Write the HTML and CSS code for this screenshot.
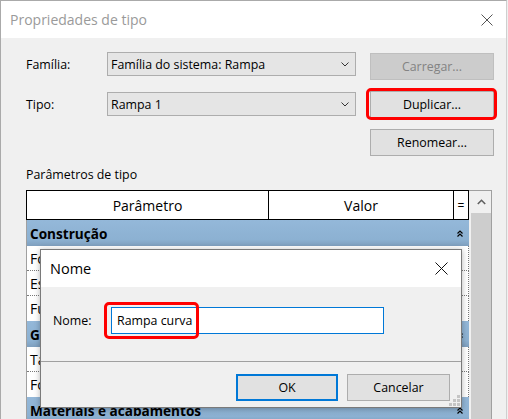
FILE: index.html
```html
<!DOCTYPE html>
<html lang="pt">
<head>
<meta charset="utf-8">
<title>Propriedades de tipo</title>
<link rel="stylesheet" href="styles.css">
</head>
<body>
<div class="window">
  <div class="titlebar">
    <span class="title">Propriedades de tipo</span>
    <svg class="x-icon x-outer" width="12" height="12" viewBox="0 0 12 12"><path d="M0.5 0.5L11.5 11.5M11.5 0.5L0.5 11.5"/></svg>
  </div>
  <div class="body">
    <div class="top">
      <div class="fields">
        <div class="field">
          <span class="label">Família:</span>
          <div class="combo"><span>Família do sistema: Rampa</span><svg class="chev" width="8" height="5" viewBox="0 0 8 5"><path d="M0.5 0.5L4 4L7.5 0.5"/></svg></div>
        </div>
        <div class="field">
          <span class="label">Tipo:</span>
          <div class="combo"><span>Rampa 1</span><svg class="chev" width="8" height="5" viewBox="0 0 8 5"><path d="M0.5 0.5L4 4L7.5 0.5"/></svg></div>
        </div>
      </div>
      <div class="actions">
        <button class="btn btn-disabled">Carregar...</button>
        <div class="marked">
          <button class="btn">Duplicar...</button>
          <span class="mark mark-dup"></span>
        </div>
        <button class="btn">Renomear...</button>
      </div>
    </div>
    <div class="section-label">Parâmetros de tipo</div>
    <div class="grid">
      <div class="grid-main">
        <div class="thead">
          <div class="th th-param">Parâmetro</div>
          <div class="th th-val">Valor</div>
          <div class="th th-eq">=</div>
        </div>
        <div class="group"><span>Construção</span><svg class="dchev" width="6" height="7" viewBox="0 0 6 7"><path d="M0.5 3.5L3 1L5.5 3.5M0.5 6.5L3 4L5.5 6.5"/></svg></div>
        <div class="row">Forma</div>
        <div class="row">Espessura</div>
        <div class="row row-last">Função</div>
        <div class="group"><span>Gráficos</span><svg class="dchev" width="6" height="7" viewBox="0 0 6 7"><path d="M0.5 3.5L3 1L5.5 3.5M0.5 6.5L3 4L5.5 6.5"/></svg></div>
        <div class="row">Tamanho do texto</div>
        <div class="row row-last">Fonte do texto</div>
        <div class="group"><span>Materiais e acabamentos</span><svg class="dchev" width="6" height="7" viewBox="0 0 6 7"><path d="M0.5 3.5L3 1L5.5 3.5M0.5 6.5L3 4L5.5 6.5"/></svg></div>
      </div>
      <div class="scrollbar">
        <div class="sb-up"><svg width="9" height="6" viewBox="0 0 9 6"><path d="M0.8 5L4.5 1.3L8.2 5"/></svg></div>
        <div class="sb-thumb"></div>
      </div>
    </div>
  </div>

  <div class="dialog">
    <div class="dlg-title">
      <span>Nome</span>
      <svg class="x-icon x-inner" width="13" height="13" viewBox="0 0 13 13"><path d="M0.5 0.5L12.5 12.5M12.5 0.5L0.5 12.5"/></svg>
    </div>
    <div class="dlg-body">
      <div class="dlg-row">
        <span class="dlg-label">Nome:</span>
        <div class="input-wrap">
          <div class="input">Rampa curva</div>
          <span class="mark mark-input"></span>
        </div>
      </div>
      <div class="separator"></div>
      <div class="dlg-buttons">
        <button class="btn btn-ok">OK</button>
        <button class="btn btn-cancel">Cancelar</button>
      </div>
    </div>
    <svg class="grip" width="11" height="11" viewBox="0 0 11 11">
      <rect x="8" y="0" width="3" height="3"/>
      <rect x="4" y="4" width="3" height="3"/><rect x="8" y="4" width="3" height="3"/>
      <rect x="0" y="8" width="3" height="3"/><rect x="4" y="8" width="3" height="3"/><rect x="8" y="8" width="3" height="3"/>
    </svg>
  </div>
</div>
</body>
</html>
```
FILE: styles.css
```css
* { box-sizing: border-box; }
html, body { margin: 0; padding: 0; }
body {
  width: 508px;
  height: 419px;
  overflow: hidden;
  background: #f0f0f0;
  font-family: "Open Sans", "Noto Sans", sans-serif;
  font-size: 12.4px;
  color: #000;
}
.window {
  position: relative;
  width: 507px;
  height: 419px;
  border: 1px solid #aaaaaa;
  border-right-color: #cfcfcf;
  border-bottom: none;
  background: #f0f0f0;
}
.titlebar {
  height: 37px;
  background: #fff;
  display: flex;
  align-items: center;
  justify-content: space-between;
  padding: 0 13px 0 9px;
}
.title { font-size: 14px; color: #9a9a9a; }
.x-icon { fill: none; stroke-width: 1; }
.x-outer { stroke: #555; }
.x-inner { stroke: #111; }

.body { padding-left: 25px; }
.top { display: flex; }
.fields {
  display: flex;
  flex-direction: column;
  gap: 16px;
  padding-top: 14px;
}
.field { display: flex; align-items: center; height: 24px; }
.label { width: 81px; }
.combo {
  width: 249px;
  height: 24px;
  border: 1px solid #adadad;
  background: #e5e5e5;
  display: flex;
  align-items: center;
  justify-content: space-between;
  padding: 0 6px 0 3px;
}
.chev { fill: none; stroke: #333; stroke-width: 1; }
.actions {
  margin-left: 14px;
  width: 124px;
  display: flex;
  flex-direction: column;
  gap: 11px;
  padding-top: 15px;
}
.btn {
  font: inherit;
  color: #000;
  height: 27px;
  width: 100%;
  border: 1px solid #adadad;
  background: #e1e1e1;
  padding: 0;
  margin: 0;
}
.btn-disabled { background: #cccccc; border-color: #bfbfbf; color: #838383; }
.marked { position: relative; }
.mark {
  position: absolute;
  border: 3px solid #ff0000;
  border-radius: 5px;
}
.mark-dup { left: -4px; top: -3px; width: 131px; height: 32px; }

.section-label {
  margin-top: 10px;
  height: 17px;
  line-height: 17px;
}
.grid {
  margin-top: 7px;
  width: 466px;
  border: 1px solid #a0a0a0;
  border-bottom: none;
  display: flex;
}
.grid-main { width: 442px; }
.thead {
  display: flex;
  width: 443px;
  height: 30px;
  margin: -1px 0 0 -1px;
  border: 1px solid #000;
  border-right: none;
  background: #fff;
  font-size: 14px;
}
.th {
  display: flex;
  align-items: center;
  justify-content: center;
  border-right: 1px solid #000;
}
.th-param { width: 242px; }
.th-val { width: 185px; }
.th-eq { width: 15px; font-size: 12px; }
.group {
  height: 26px;
  display: flex;
  align-items: center;
  justify-content: space-between;
  padding: 0 6px 0 3px;
  font-weight: bold;
  font-size: 13.6px;
  background: linear-gradient(to bottom, #94b8d9 0%, #8cb1d2 75%, #7f9fbe 100%);
}
.dchev { fill: none; stroke: #000; stroke-width: 1.2; }
.row {
  height: 25px;
  display: flex;
  align-items: center;
  padding-left: 3px;
  background: #fff;
  font-size: 14px;
  border-bottom: 1px dotted #7a7a7a;
  border-right: 1px dotted #7a7a7a;
  white-space: nowrap;
  overflow: hidden;
}
.row-last { border-bottom: none; }
.scrollbar {
  width: 22px;
  background: #f0f0f0;
  display: flex;
  flex-direction: column;
}
.sb-up {
  height: 22px;
  display: flex;
  align-items: center;
  justify-content: center;
  padding-left: 2px;
}
.sb-up svg { fill: none; stroke: #606060; stroke-width: 1.6; }
.sb-thumb {
  flex: 1;
  margin-left: 2px;
  width: 20px;
  background: #cdcdcd;
}

.dialog {
  position: absolute;
  left: 39px;
  top: 248px;
  width: 422px;
  height: 159px;
  border: 1px solid #7a7a7a;
  background: #f0f0f0;
  box-shadow: 0 1px 6px rgba(0, 0, 0, 0.3);
}
.dlg-title {
  height: 37px;
  background: #fff;
  display: flex;
  align-items: center;
  justify-content: space-between;
  padding: 0 13px 0 9px;
  font-size: 14.5px;
}
.dlg-body { padding: 20px 11px 0 12px; }
.dlg-row { display: flex; align-items: center; height: 27px; }
.dlg-label { width: 58px; }
.input-wrap { position: relative; }
.input {
  width: 273px;
  height: 27px;
  border: 1px solid #0078d7;
  background: #fff;
  display: flex;
  align-items: center;
  padding-left: 5px;
}
.mark-input { left: -7px; top: -5px; width: 95px; height: 37px; }
.separator {
  margin: 27px -11px 0 -12px;
  height: 1px;
  background: #a0a0a0;
}
.dlg-buttons {
  margin-top: 12px;
  display: flex;
  justify-content: flex-end;
  gap: 9px;
}
.dlg-buttons .btn { height: 27px; }
.btn-ok { width: 102px; border: 2px solid #0078d7; }
.btn-cancel { width: 103px; }
.grip {
  position: absolute;
  right: 1px;
  bottom: 1px;
  fill: #c4c4c4;
}
```
